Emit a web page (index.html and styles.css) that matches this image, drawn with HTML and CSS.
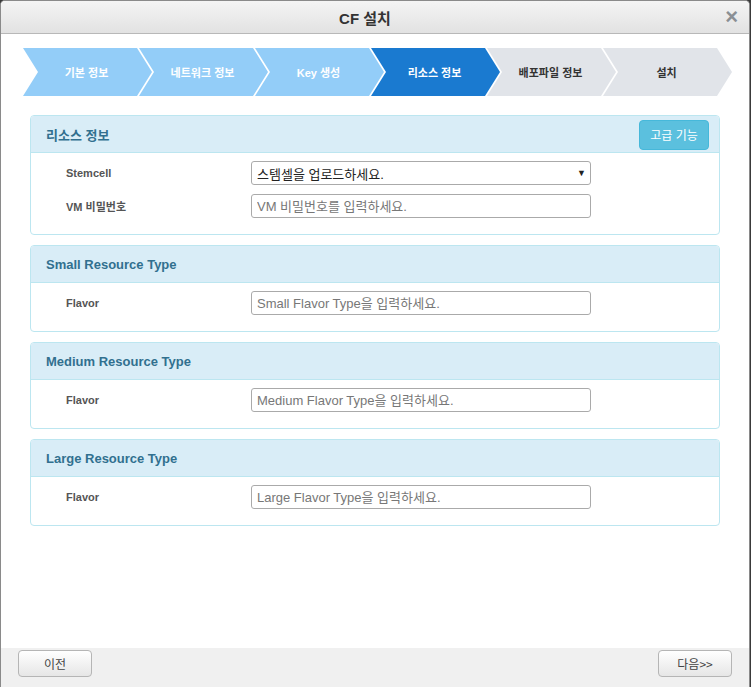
FILE: index.html
```html
<!DOCTYPE html>
<html lang="ko">
<head>
<meta charset="utf-8">
<title>CF 설치</title>
<link rel="stylesheet" href="styles.css">
</head>
<body>
<div class="dialog">
  <div class="titlebar">
    <span class="title">CF 설치</span>
    <span class="close">×</span>
  </div>
  <div class="content">
    <div class="steps">
      <div class="step done">기본 정보</div>
      <div class="step done">네트워크 정보</div>
      <div class="step done">Key 생성</div>
      <div class="step active">리소스 정보</div>
      <div class="step todo">배포파일 정보</div>
      <div class="step todo">설치</div>
    </div>

    <div class="panel">
      <div class="panel-head">
        <span class="panel-title">리소스 정보</span>
        <button class="btn-info">고급 기능</button>
      </div>
      <div class="panel-body">
        <div class="row">
          <label class="label">Stemcell</label>
          <div class="select"><span>스템셀을 업로드하세요.</span><span class="arrow">▼</span></div>
        </div>
        <div class="row">
          <label class="label">VM 비밀번호</label>
          <input class="input" type="text" placeholder="VM 비밀번호를 입력하세요.">
        </div>
      </div>
    </div>

    <div class="panel">
      <div class="panel-head"><span class="panel-title">Small Resource Type</span></div>
      <div class="panel-body">
        <div class="row">
          <label class="label">Flavor</label>
          <input class="input" type="text" placeholder="Small Flavor Type을 입력하세요.">
        </div>
      </div>
    </div>

    <div class="panel">
      <div class="panel-head"><span class="panel-title">Medium Resource Type</span></div>
      <div class="panel-body">
        <div class="row">
          <label class="label">Flavor</label>
          <input class="input" type="text" placeholder="Medium Flavor Type을 입력하세요.">
        </div>
      </div>
    </div>

    <div class="panel">
      <div class="panel-head"><span class="panel-title">Large Resource Type</span></div>
      <div class="panel-body">
        <div class="row">
          <label class="label">Flavor</label>
          <input class="input" type="text" placeholder="Large Flavor Type을 입력하세요.">
        </div>
      </div>
    </div>
  </div>
  <div class="footer">
    <button class="btn">이전</button>
    <button class="btn">다음&gt;&gt;</button>
  </div>
</div>
</body>
</html>
```

FILE: styles.css
```css
* { box-sizing: border-box; }
html, body { margin: 0; padding: 0; }
body {
  background: #3a3a3a;
  width: 751px;
  height: 687px;
  overflow: hidden;
  font-family: "Liberation Sans", "Noto Sans CJK KR", sans-serif;
}
.dialog {
  width: 750px;
  height: 687px;
  background: #fff;
  border: 1px solid #8a8a8a;
  border-bottom: none;
  border-radius: 5px 5px 0 0;
  display: flex;
  flex-direction: column;
  overflow: hidden;
}
.titlebar {
  height: 33px;
  flex: none;
  background: linear-gradient(#f4f4f4, #e2e2e2);
  border-bottom: 1px solid #b8b8b8;
  display: flex;
  align-items: center;
  justify-content: center;
  padding-right: 20px;
  position: relative;
}
.title {
  font-size: 15px;
  font-weight: bold;
  color: #333;
}
.close {
  position: absolute;
  right: 11px;
  top: 4px;
  font-size: 22px;
  font-weight: bold;
  color: #8a8f94;
  line-height: 24px;
}
.content {
  flex: 1;
  padding: 14px 29px 0 29px;
  display: flex;
  flex-direction: column;
  gap: 10px;
}
.steps {
  display: flex;
  margin-left: -7px;
  margin-bottom: 9px;
}
.step {
  width: 129px;
  height: 48px;
  margin-right: -13px;
  flex: none;
  display: flex;
  align-items: center;
  justify-content: center;
  padding: 0 16px 0 14px;
  font-size: 11px;
  font-weight: bold;
  color: #fff;
  clip-path: polygon(0 0, calc(100% - 15px) 0, 100% 50%, calc(100% - 15px) 100%, 0 100%, 15px 50%);
}
.step.done { background: #93cdf8; }
.step.active { background: #1a7ad0; }
.step.todo { background: #e1e4e9; color: #333; }

.panel {
  border: 1px solid #bce6f0;
  border-radius: 4px;
  background: #fff;
  overflow: hidden;
}
.panel-head {
  height: 37px;
  background: #d9edf7;
  border-bottom: 1px solid #bce6f0;
  display: flex;
  align-items: center;
  justify-content: space-between;
  padding: 0 10px 0 15px;
}
.panel-title {
  font-size: 13px;
  font-weight: bold;
  color: #31708f;
}
.btn-info {
  width: 70px;
  height: 30px;
  margin-top: 1px;
  background: #5bc0de;
  border: 1px solid #46b8da;
  border-radius: 4px;
  color: #fff;
  font-size: 12px;
  font-family: "Noto Sans CJK KR", sans-serif;
  padding: 0;
}
.panel-body {
  padding: 8px 0 16px 35px;
  display: flex;
  flex-direction: column;
  gap: 9px;
}
.row {
  display: flex;
  align-items: center;
  height: 24px;
}
.label {
  width: 185px;
  flex: none;
  font-size: 11px;
  font-weight: bold;
  color: #555;
  padding-bottom: 1px;
}
.input, .select {
  width: 340px;
  height: 24px;
  border: 1px solid #aaa;
  border-radius: 3px;
  font-size: 13px;
  padding: 0 5px;
  font-family: "Liberation Sans", "Noto Sans CJK KR", sans-serif;
  color: #333;
  background: #fff;
}
.input::placeholder { color: #777; }
.select {
  display: flex;
  align-items: center;
  justify-content: space-between;
  color: #222;
  padding-right: 4px;
}
.arrow {
  font-size: 9px;
  color: #222;
}
.footer {
  height: 39px;
  flex: none;
  background: #f0f0f0;
  display: flex;
  justify-content: space-between;
  align-items: flex-start;
  padding: 2px 17px 0 17px;
}
.btn {
  width: 74px;
  height: 27px;
  border: 1px solid #b5b5b5;
  border-radius: 4px;
  background: linear-gradient(#ffffff, #e6e6e6);
  font-size: 12px;
  color: #444;
  font-family: "Noto Sans CJK KR", sans-serif;
  padding: 0;
}
```
